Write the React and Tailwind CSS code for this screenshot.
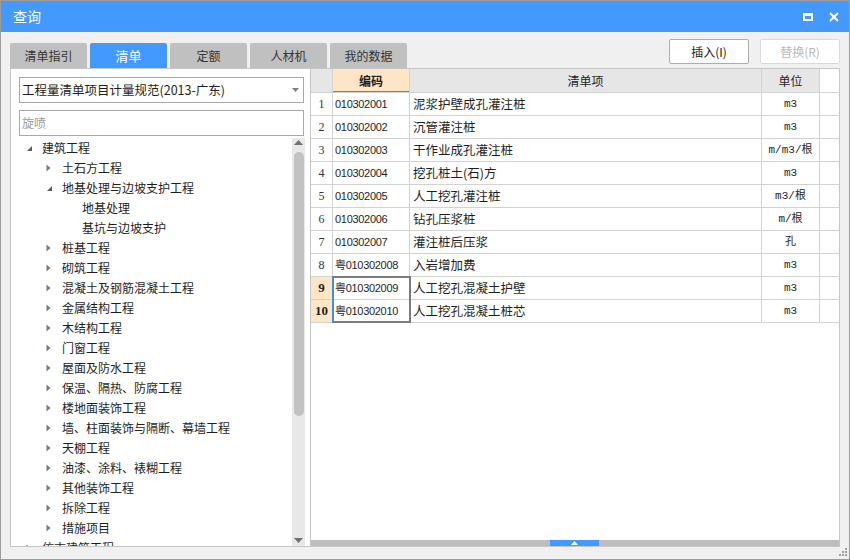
import React from "react";

const tabs = ["清单指引", "清单", "定额", "人材机", "我的数据"];

const tree = [
  { t: "建筑工程", l: 0, s: "open" },
  { t: "土石方工程", l: 1, s: "closed" },
  { t: "地基处理与边坡支护工程", l: 1, s: "open" },
  { t: "地基处理", l: 2 },
  { t: "基坑与边坡支护", l: 2 },
  { t: "桩基工程", l: 1, s: "closed" },
  { t: "砌筑工程", l: 1, s: "closed" },
  { t: "混凝土及钢筋混凝土工程", l: 1, s: "closed" },
  { t: "金属结构工程", l: 1, s: "closed" },
  { t: "木结构工程", l: 1, s: "closed" },
  { t: "门窗工程", l: 1, s: "closed" },
  { t: "屋面及防水工程", l: 1, s: "closed" },
  { t: "保温、隔热、防腐工程", l: 1, s: "closed" },
  { t: "楼地面装饰工程", l: 1, s: "closed" },
  { t: "墙、柱面装饰与隔断、幕墙工程", l: 1, s: "closed" },
  { t: "天棚工程", l: 1, s: "closed" },
  { t: "油漆、涂料、裱糊工程", l: 1, s: "closed" },
  { t: "其他装饰工程", l: 1, s: "closed" },
  { t: "拆除工程", l: 1, s: "closed" },
  { t: "措施项目", l: 1, s: "closed" },
  { t: "仿古建筑工程", l: 0, s: "closed" },
];

const rows = [
  ["010302001", "泥浆护壁成孔灌注桩", "m3"],
  ["010302002", "沉管灌注桩", "m3"],
  ["010302003", "干作业成孔灌注桩", "m/m3/根"],
  ["010302004", "挖孔桩土(石)方", "m3"],
  ["010302005", "人工挖孔灌注桩", "m3/根"],
  ["010302006", "钻孔压浆桩", "m/根"],
  ["010302007", "灌注桩后压浆", "孔"],
  ["粤010302008", "入岩增加费", "m3"],
  ["粤010302009", "人工挖孔混凝土护壁", "m3"],
  ["粤010302010", "人工挖孔混凝土桩芯", "m3"],
];

function Arrow({ s }) {
  if (s === "open")
    return (
      <svg width="7" height="7" viewBox="0 0 7 7">
        <path d="M6 1 L6 6 L1 6 Z" fill="#5a5a5a" />
      </svg>
    );
  if (s === "closed")
    return (
      <svg width="5" height="8" viewBox="0 0 5 8">
        <path d="M0.5 0.5 L4.5 4 L0.5 7.5 Z" fill="#7a7a7a" />
      </svg>
    );
  return null;
}

function TreeRow({ item }) {
  const pad = item.l === 0 ? "pl-[15px]" : item.l === 1 ? "pl-[35px]" : "pl-[71px]";
  return (
    <div className={`h-[20px] flex items-center ${pad} whitespace-nowrap`}>
      {item.s ? (
        <span className="w-[16px] flex items-center">
          <Arrow s={item.s} />
        </span>
      ) : null}
      <span>{item.t}</span>
    </div>
  );
}

export default function App() {
  return (
    <div className="w-[850px] h-[560px] bg-[#f0f0f0] border border-[#9c9c9c] flex flex-col text-[12px] text-[#1e1e1e] font-['Noto_Sans_CJK_SC',sans-serif] overflow-hidden">
      {/* title */}
      <div className="h-[31px] shrink-0 bg-[#4499ff] flex items-center justify-between pl-[12px] pr-[10px] text-white text-[14px]">
        <span>查询</span>
        <div className="flex items-center gap-[16px]">
          <div className="w-[10px] h-[8px] border-2 border-t-[3px] border-white" />
          <svg width="10" height="10" viewBox="0 0 10 10">
            <path d="M1 1 L9 9 M9 1 L1 9" stroke="white" strokeWidth="2" />
          </svg>
        </div>
      </div>

      {/* tabs + buttons */}
      <div className="h-[36px] shrink-0 flex justify-between pl-[9px] pr-[9px]">
        <div className="flex items-end gap-[3px]">
          {tabs.map((t, i) => (
            <div
              key={t}
              className={`w-[77px] h-[25px] rounded-t-[2px] flex items-center justify-center ${
                i === 1 ? "bg-[#4499ff] text-white text-[13px]" : "bg-[#c0c0c0] text-[#333]"
              }`}
            >
              {t}
            </div>
          ))}
        </div>
        <div className="flex gap-[11px] pt-[7px]">
          <div className="w-[80px] h-[25px] bg-white border border-[#adadad] rounded-[2px] flex items-center justify-center text-[#222]">
            插入(I)
          </div>
          <div className="w-[80px] h-[25px] bg-white border border-[#dadada] rounded-[2px] flex items-center justify-center text-[#b8b8b8]">
            替换(R)
          </div>
        </div>
      </div>

      {/* main */}
      <div className="h-[479px] shrink-0 flex ml-[9px] mr-[9px]">
        {/* left */}
        <div className="w-[301px] h-full bg-white border border-[#c6c6c6] flex flex-col">
          <div className="mt-[8px] ml-[8px] mr-[6px] h-[26px] border border-[#a8a8a8] flex items-center justify-between pl-[2px] pr-[4px]">
            <span className="text-[12.5px]">工程量清单项目计量规范(2013-广东)</span>
            <svg width="7" height="4" viewBox="0 0 7 4">
              <path d="M0 0 L7 0 L3.5 4 Z" fill="#808080" />
            </svg>
          </div>
          <div className="mt-[7px] ml-[8px] mr-[6px] h-[26px] border border-[#a8a8a8] flex items-center pl-[2px] text-[#9a9a9a]">
            旋喷
          </div>
          <div className="mt-[2px] flex-1 flex min-h-0 mr-[5px]">
            <div className="flex-1 overflow-hidden">
              {tree.map((it, i) => (
                <TreeRow key={i} item={it} />
              ))}
            </div>
            <div className="w-[13px] bg-[#e8e8e8] flex flex-col items-center">
              <svg className="mt-[2px]" width="9" height="5" viewBox="0 0 9 5">
                <path d="M0 5 L9 5 L4.5 0 Z" fill="#707070" />
              </svg>
              <div className="mt-[7px] w-[10px] h-[264px] rounded-[5px] bg-[#c2c2c2]" />
              <div className="flex-1" />
              <svg className="mb-[3px]" width="9" height="5" viewBox="0 0 9 5">
                <path d="M0 0 L9 0 L4.5 5 Z" fill="#707070" />
              </svg>
            </div>
          </div>
        </div>

        {/* right */}
        <div className="flex-1 h-full bg-white border-t border-r border-b border-[#c6c6c6] flex flex-col">
          <div className="flex-1 relative">
            <div className="flex h-[24px] border-b border-[#d2d2d2]">
              <div className="w-[22px] bg-[#e6e6e6] border-r border-[#d2d2d2]" />
              <div className="w-[77px] bg-[#fde5c6] border-r border-[#d2d2d2] flex items-center justify-center font-bold shadow-[inset_0_-1px_0_#3f8fe6]">
                编码
              </div>
              <div className="w-[352px] bg-[#e6e6e6] border-r border-[#d2d2d2] flex items-center justify-center">
                清单项
              </div>
              <div className="w-[58px] bg-[#e6e6e6] border-r border-[#d2d2d2] flex items-center justify-center">
                单位
              </div>
            </div>
            {rows.map((r, i) => {
              const sel = i >= 8;
              return (
                <div key={i} className="flex h-[23px] border-b border-[#d2d2d2]">
                  <div
                    className={`w-[22px] border-r border-[#d2d2d2] flex items-center justify-center font-['Liberation_Serif',serif] ${
                      sel ? "bg-[#fde5c6] font-bold text-[13px]" : "text-[12px] text-[#333]"
                    }`}
                  >
                    {i + 1}
                  </div>
                  <div className="w-[77px] border-r border-[#d2d2d2] flex items-center pl-[2px] font-['Liberation_Sans','Noto_Sans_CJK_SC',sans-serif] text-[11px] tracking-[-0.3px]">
                    {r[0]}
                  </div>
                  <div className="w-[352px] border-r border-[#d2d2d2] flex items-center pl-[3px] text-[12.5px]">
                    {r[1]}
                  </div>
                  <div className="w-[58px] border-r border-[#d2d2d2] flex items-center justify-center font-['Liberation_Mono','Noto_Sans_CJK_SC',monospace] text-[11px]">
                    {r[2]}
                  </div>
                </div>
              );
            })}
            <div className="absolute left-[21px] top-[207px] w-[79px] h-[47px] border-2 border-[#7b7b7b] border-l-[#3d8fe8] pointer-events-none" />
          </div>
          <div className="h-[6px] bg-[#bdbdbd] flex">
            <div className="ml-[239px] w-[49px] h-full bg-[#4499ff] flex items-center justify-center">
              <svg width="7" height="4" viewBox="0 0 7 4">
                <path d="M0 4 L7 4 L3.5 0 Z" fill="white" />
              </svg>
            </div>
          </div>
        </div>
      </div>

      {/* resize grip */}
      <div className="flex justify-end pr-[1px] pt-[1px]">
        <svg width="9" height="9" viewBox="0 0 9 9">
          <rect x="6" y="0" width="2" height="2" fill="#a0a0a0" />
          <rect x="3" y="3" width="2" height="2" fill="#a0a0a0" />
          <rect x="6" y="3" width="2" height="2" fill="#a0a0a0" />
          <rect x="0" y="6" width="2" height="2" fill="#a0a0a0" />
          <rect x="3" y="6" width="2" height="2" fill="#a0a0a0" />
          <rect x="6" y="6" width="2" height="2" fill="#a0a0a0" />
        </svg>
      </div>
    </div>
  );
}
